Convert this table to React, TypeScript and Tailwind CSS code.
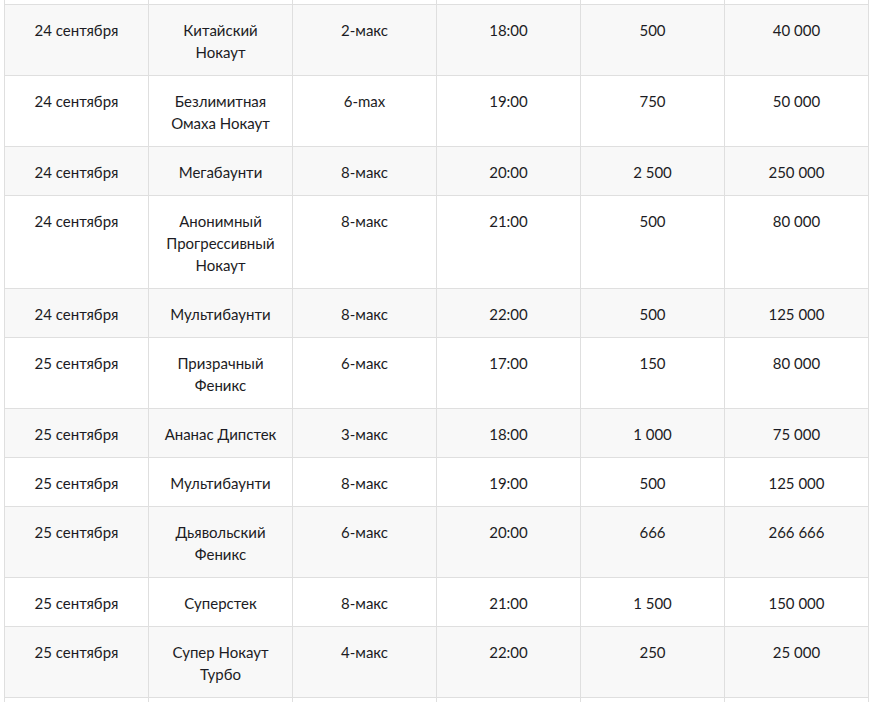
import React from "react";

interface Row {
  date: string;
  name: string[];
  table: string;
  time: string;
  buyin: string;
  prize: string;
}

const rows: Row[] = [
  { date: "24 сентября", name: ["Китайский", "Нокаут"], table: "2-макс", time: "18:00", buyin: "500", prize: "40 000" },
  { date: "24 сентября", name: ["Безлимитная", "Омаха Нокаут"], table: "6-max", time: "19:00", buyin: "750", prize: "50 000" },
  { date: "24 сентября", name: ["Мегабаунти"], table: "8-макс", time: "20:00", buyin: "2 500", prize: "250 000" },
  { date: "24 сентября", name: ["Анонимный", "Прогрессивный", "Нокаут"], table: "8-макс", time: "21:00", buyin: "500", prize: "80 000" },
  { date: "24 сентября", name: ["Мультибаунти"], table: "8-макс", time: "22:00", buyin: "500", prize: "125 000" },
  { date: "25 сентября", name: ["Призрачный", "Феникс"], table: "6-макс", time: "17:00", buyin: "150", prize: "80 000" },
  { date: "25 сентября", name: ["Ананас Дипстек"], table: "3-макс", time: "18:00", buyin: "1 000", prize: "75 000" },
  { date: "25 сентября", name: ["Мультибаунти"], table: "8-макс", time: "19:00", buyin: "500", prize: "125 000" },
  { date: "25 сентября", name: ["Дьявольский", "Феникс"], table: "6-макс", time: "20:00", buyin: "666", prize: "266 666" },
  { date: "25 сентября", name: ["Суперстек"], table: "8-макс", time: "21:00", buyin: "1 500", prize: "150 000" },
  { date: "25 сентября", name: ["Супер Нокаут", "Турбо"], table: "4-макс", time: "22:00", buyin: "250", prize: "25 000" },
];

const cell = "border border-[#dfdfdf] px-[10px] pt-[14px] pb-[12px] align-top text-center";

export default function App() {
  return (
    <div className="w-[875px] h-[702px] overflow-hidden bg-white pl-[4px] font-['Lato','Noto_Sans',sans-serif] text-[15px] leading-[22px] text-[#1c1c24]">
      <table className="table-fixed border-collapse w-[865px]">
        <colgroup>
          <col className="w-[144px]" />
          <col className="w-[144px]" />
          <col className="w-[144px]" />
          <col className="w-[144px]" />
          <col className="w-[144px]" />
          <col className="w-[144px]" />
        </colgroup>
        <tbody>
          <tr className="h-[4px] bg-white">
            {[0, 1, 2, 3, 4, 5].map((i) => (
              <td key={i} className="border border-t-0 border-[#dfdfdf] p-0" />
            ))}
          </tr>
          {rows.map((r, i) => (
            <tr key={i} className={i % 2 === 0 ? "bg-[#f8f8f8]" : "bg-white"}>
              <td className={cell}>{r.date}</td>
              <td className={cell}>
                {r.name.map((line, j) => (
                  <div key={j}>{line}</div>
                ))}
              </td>
              <td className={cell}>{r.table}</td>
              <td className={cell}>{r.time}</td>
              <td className={cell}>{r.buyin}</td>
              <td className={cell}>{r.prize}</td>
            </tr>
          ))}
          <tr className="bg-white">
            {[0, 1, 2, 3, 4, 5].map((i) => (
              <td key={i} className={cell}>&nbsp;</td>
            ))}
          </tr>
        </tbody>
      </table>
    </div>
  );
}
